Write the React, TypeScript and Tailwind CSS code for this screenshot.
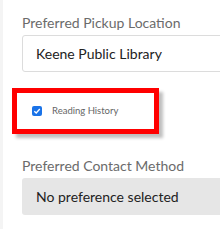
import React from 'react';

export default function App() {
  return (
    <div className="flex h-[229px] w-[220px] overflow-hidden bg-white" style={{ fontFamily: 'Lato, "Open Sans", sans-serif' }}>
      {/* left gutter */}
      <div className="w-[3px] shrink-0 bg-[#f4f4f4]" />

      <div className="flex-1 pl-[19px] pt-[13px]">
        <label className="block text-[14px] leading-[20px] text-[#6b6b6b]">Preferred Pickup Location</label>
        <div className="mt-[2px] -mr-[10px] flex h-[37px] items-center rounded-[3px] border border-[#dcdcdc] pl-[13px] text-[14px] text-[#222]">
          Keene Public Library
        </div>

        {/* highlighted checkbox */}
        <div className="-ml-[10px] mt-[16px] flex h-[46px] w-[147px] items-center border-[5px] border-[#ff0000] pl-[15px] shadow-[4px_4px_3px_rgba(0,0,0,0.25)]">
          <span className="flex h-[10px] w-[10px] items-center justify-center rounded-[2px] bg-[#1a73e8]">
            <svg width="8" height="8" viewBox="0 0 8 8" fill="none">
              <path d="M1.3 4.2 L3.2 6 L6.8 2" stroke="white" strokeWidth="1.3" />
            </svg>
          </span>
          <span className="ml-[10px] text-[9.5px] text-[#666]">Reading History</span>
        </div>

        <label className="mt-[22px] block text-[14px] leading-[20px] text-[#6b6b6b]">Preferred Contact Method</label>
        <div className="mt-[2px] -mr-[10px] flex h-[37px] items-center rounded-[3px] bg-[#e6e6e6] pl-[14px] text-[14px] text-[#222]">
          No preference selected
        </div>
      </div>
    </div>
  );
}
